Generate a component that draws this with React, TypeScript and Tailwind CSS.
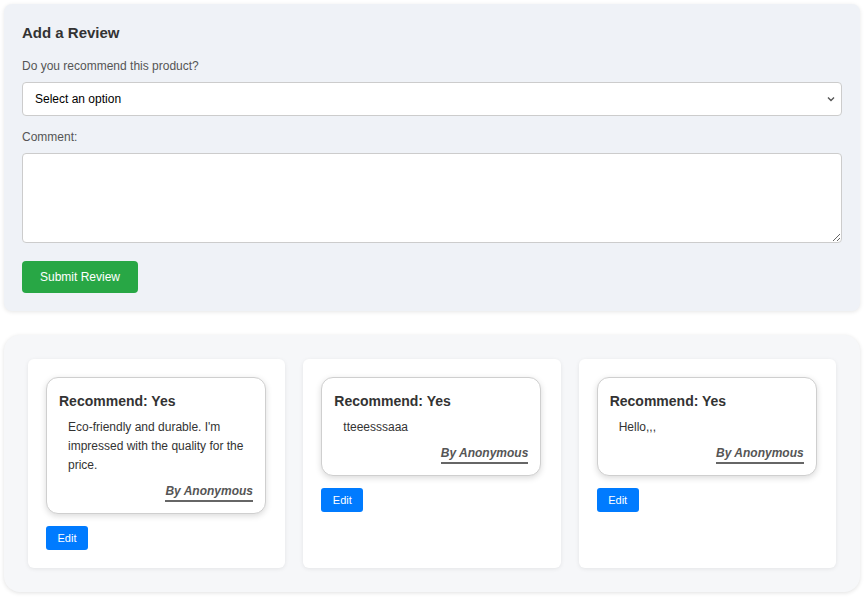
import { useState } from 'react';

interface Review {
  id: number;
  recommend: string;
  comment: string;
  author: string;
}

const REVIEWS: Review[] = [
  {
    id: 1,
    recommend: 'Yes',
    comment: "Eco-friendly and durable. I'm impressed with the quality for the price.",
    author: 'Anonymous',
  },
  { id: 2, recommend: 'Yes', comment: 'tteeesssaaa', author: 'Anonymous' },
  { id: 3, recommend: 'Yes', comment: 'Hello,,,', author: 'Anonymous' },
];

function ReviewCard({ review }: { review: Review }) {
  return (
    <div className="bg-white rounded-md p-[18px] shadow-[0_1px_4px_rgba(0,0,0,0.08)]">
      <div className="w-[220px] rounded-xl border border-[#cfcfcf] bg-white px-[12px] pt-[12px] pb-[11px] shadow-[0_2px_6px_rgba(0,0,0,0.15)]">
        <h4 className="text-[14px] font-bold leading-[22px] text-[#333]">
          Recommend: {review.recommend}
        </h4>
        <p className="mt-[6px] px-[9px] text-[12px] leading-[19px] text-[#333]">{review.comment}</p>
        <div className="mt-[8px] flex justify-end">
          <span className="border-b-2 border-[#666] pb-[1px] text-[12px] font-bold italic leading-[16px] text-[#555]">
            By {review.author}
          </span>
        </div>
      </div>
      <button className="mt-[12px] h-[24px] w-[42px] rounded-[3px] bg-[#007bff] text-[11px] text-white">
        Edit
      </button>
    </div>
  );
}

export default function App() {
  const [recommend, setRecommend] = useState('');
  const [comment, setComment] = useState('');

  return (
    <div className="min-h-screen bg-white p-[4px] font-['Liberation_Sans',Arial,sans-serif] text-[#333]">
      {/* Review form */}
      <div className="rounded-lg bg-[#eff2f7] p-[18px] shadow-[0_1px_4px_rgba(0,0,0,0.1)]">
        <h3 className="text-[15px] font-bold leading-[22px] text-[#333]">Add a Review</h3>

        <label className="mt-[13px] block text-[12px] leading-[18px] text-[#555]">
          Do you recommend this product?
        </label>
        <div className="relative mt-[7px]">
          <select
            value={recommend}
            onChange={(e) => setRecommend(e.target.value)}
            className="block h-[34px] w-full appearance-none rounded-[4px] border border-[#ccc] bg-white pl-[12px] text-[12px] text-black outline-none"
          >
            <option value="">Select an option</option>
            <option value="yes">Yes</option>
            <option value="no">No</option>
          </select>
          <svg
            className="pointer-events-none absolute right-[6px] top-1/2 -translate-y-1/2"
            width="10"
            height="10"
            viewBox="0 0 10 10"
          >
            <path d="M2 3.5 L5 6.5 L8 3.5" fill="none" stroke="#555" strokeWidth="1.4" />
          </svg>
        </div>

        <label className="mt-[12px] block text-[12px] leading-[18px] text-[#555]">Comment:</label>
        <textarea
          value={comment}
          onChange={(e) => setComment(e.target.value)}
          className="mt-[7px] block h-[90px] w-full rounded-[4px] border border-[#ccc] bg-white p-2 text-[12px] outline-none"
        />

        <button className="mt-[18px] h-[32px] w-[116px] rounded-[4px] bg-[#28a745] text-[12px] text-white">
          Submit Review
        </button>
      </div>

      {/* Review list */}
      <div className="mt-[24px] grid grid-cols-3 gap-[18px] rounded-2xl bg-[#f6f7f9] p-[24px] shadow-[0_1px_4px_rgba(0,0,0,0.12)]">
        {REVIEWS.map((r) => (
          <ReviewCard key={r.id} review={r} />
        ))}
      </div>
    </div>
  );
}
